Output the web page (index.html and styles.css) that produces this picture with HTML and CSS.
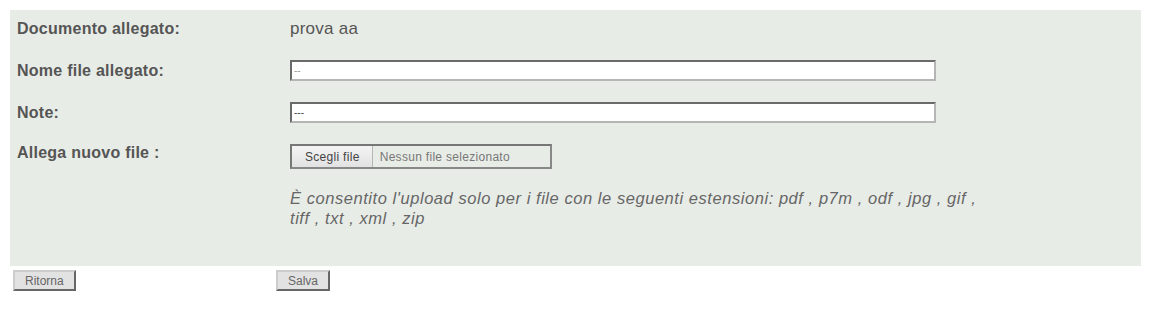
FILE: index.html
```html
<!DOCTYPE html>
<html lang="it">
<head>
  <meta charset="UTF-8">
  <title>Allegato</title>
  <link rel="stylesheet" href="styles.css">
</head>
<body>
  <div class="panel">
    <div class="row row-first">
      <div class="label">Documento allegato:</div>
      <div class="value">prova aa</div>
    </div>
    <div class="row">
      <div class="label">Nome file allegato:</div>
      <div><input class="text-input light" type="text" value="--"></div>
    </div>
    <div class="row">
      <div class="label">Note:</div>
      <div><input class="text-input" type="text" value="---"></div>
    </div>
    <div class="row row-top">
      <div class="label">Allega nuovo file :</div>
      <div class="file-box">
        <span class="file-btn">Scegli file</span>
        <span class="file-name">Nessun file selezionato</span>
      </div>
    </div>
    <div class="row row-hint">
      <div></div>
      <div class="hint">È consentito l'upload solo per i file con le seguenti estensioni: pdf , p7m , odf , jpg , gif ,<br>tiff , txt , xml , zip</div>
    </div>
  </div>
  <div class="actions">
    <div><button class="btn">Ritorna</button></div>
    <div><button class="btn">Salva</button></div>
  </div>
</body>
</html>
```

FILE: styles.css
```css
body {
  margin: 10px 9px 10px 10px;
  font-family: "Liberation Sans", Arial, sans-serif;
  color: #555;
  background: #fff;
}
.panel {
  background: #e8ece6;
  padding: 9px 7px 38px;
}
.row {
  display: grid;
  grid-template-columns: 273px 1fr;
  align-items: center;
  margin-top: 21px;
}
.row-first {
  margin-top: 0;
  height: 20px;
}
.row-top {
  align-items: start;
}
.row-hint {
  margin-top: 19px;
  align-items: start;
}
.label {
  font-size: 16px;
  font-weight: bold;
  letter-spacing: 0.25px;
  color: #555;
}
.value {
  font-size: 17px;
  letter-spacing: 0.25px;
  color: #555;
}
.text-input {
  display: block;
  box-sizing: border-box;
  width: 646px;
  height: 21px;
  margin: 0;
  padding: 0 2px;
  background: #fff;
  border: 2px solid #b5b5b5;
  border-top-color: #6a6a6a;
  border-left-color: #6a6a6a;
  font-family: "Liberation Sans", Arial, sans-serif;
  font-size: 10px;
  color: #444;
}
.text-input.light {
  color: #999;
}
.file-box {
  display: flex;
  align-items: stretch;
  width: 262px;
  height: 25px;
  box-sizing: border-box;
  border: 2px solid #777;
  border-right-color: #888;
  border-bottom-color: #888;
  background: #e8ece6;
  font-size: 12px;
  letter-spacing: 0.3px;
}
.file-btn {
  display: flex;
  align-items: center;
  padding: 0 12px 0 13px;
  background: linear-gradient(#f4f4f4, #e2e2e2);
  border-right: 1px solid #b5b5b5;
  color: #444;
}
.file-name {
  display: flex;
  align-items: center;
  padding-left: 7px;
  color: #777;
}
.hint {
  font-size: 16.5px;
  font-style: italic;
  letter-spacing: 0.55px;
  line-height: 20px;
  color: #666;
}
.actions {
  display: grid;
  grid-template-columns: 263px auto;
  padding: 4px 0 0 3px;
}
.btn {
  font-family: "Liberation Sans", Arial, sans-serif;
  font-size: 12px;
  color: #666;
  background: #e2e2e2;
  height: 21px;
  padding: 0 10px;
  border: 2px solid #999;
  border-top-color: #ccc;
  border-left-color: #ccc;
  border-right-color: #666;
  border-bottom-color: #666;
}
```
